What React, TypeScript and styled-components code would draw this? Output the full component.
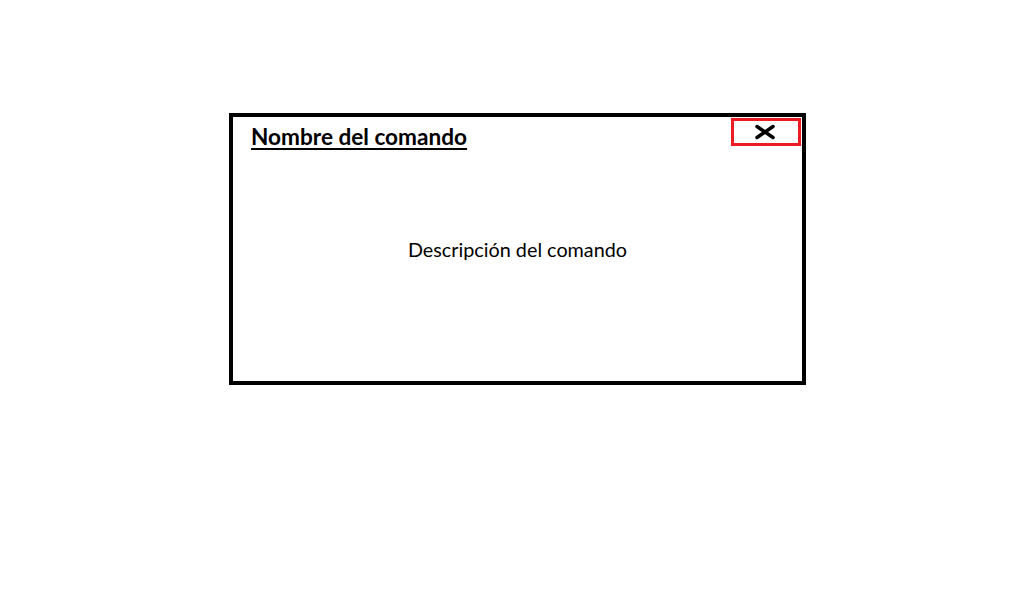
import React from "react";
import styled, { createGlobalStyle } from "styled-components";

const Global = createGlobalStyle`
  html, body { margin: 0; padding: 0; background: #ffffff; }
  body { font-family: "Lato", "Open Sans", sans-serif; color: #000; }
`;

const Page = styled.div`
  width: 1018px;
  height: 605px;
  padding: 113px 0 0 229px;
  box-sizing: border-box;
`;

const Dialog = styled.section`
  width: 577px;
  height: 272px;
  box-sizing: border-box;
  border: 4px solid #000;
  background: #fff;
  display: grid;
  grid-template: 1fr / 1fr;
`;

const Header = styled.header`
  grid-area: 1 / 1;
  align-self: start;
  display: flex;
  justify-content: space-between;
  align-items: flex-start;
  padding: 1px 1px 0 18px;
`;

const Title = styled.h1`
  margin: 6px 0 0;
  font-family: "Lato", sans-serif;
  font-weight: 700;
  font-size: 22.6px;
  line-height: 26px;
  text-decoration: underline;
  text-decoration-thickness: 2px;
  text-underline-offset: 3px;
`;

const CloseButton = styled.button`
  width: 70px;
  height: 28px;
  box-sizing: border-box;
  border: 3px solid #ed1c24;
  background: #fff;
  padding: 0 2px 0 0;
  display: flex;
  align-items: center;
  justify-content: center;
  cursor: pointer;
`;

const Body = styled.p`
  grid-area: 1 / 1;
  align-self: center;
  justify-self: center;
  margin: 0;
  font-family: "Lato", sans-serif;
  font-size: 19.8px;
  line-height: 24px;
`;

export default function App() {
  return (
    <>
      <Global />
      <Page>
        <Dialog>
          <Header>
            <Title>Nombre del comando</Title>
            <CloseButton aria-label="Cerrar">
              <svg width="22" height="16" viewBox="0 0 22 16">
                <path d="M3 2.5 L19 13.5 M19 2.5 L3 13.5" stroke="#000" strokeWidth="3.5" strokeLinecap="round" />
              </svg>
            </CloseButton>
          </Header>
          <Body>Descripción del comando</Body>
        </Dialog>
      </Page>
    </>
  );
}
